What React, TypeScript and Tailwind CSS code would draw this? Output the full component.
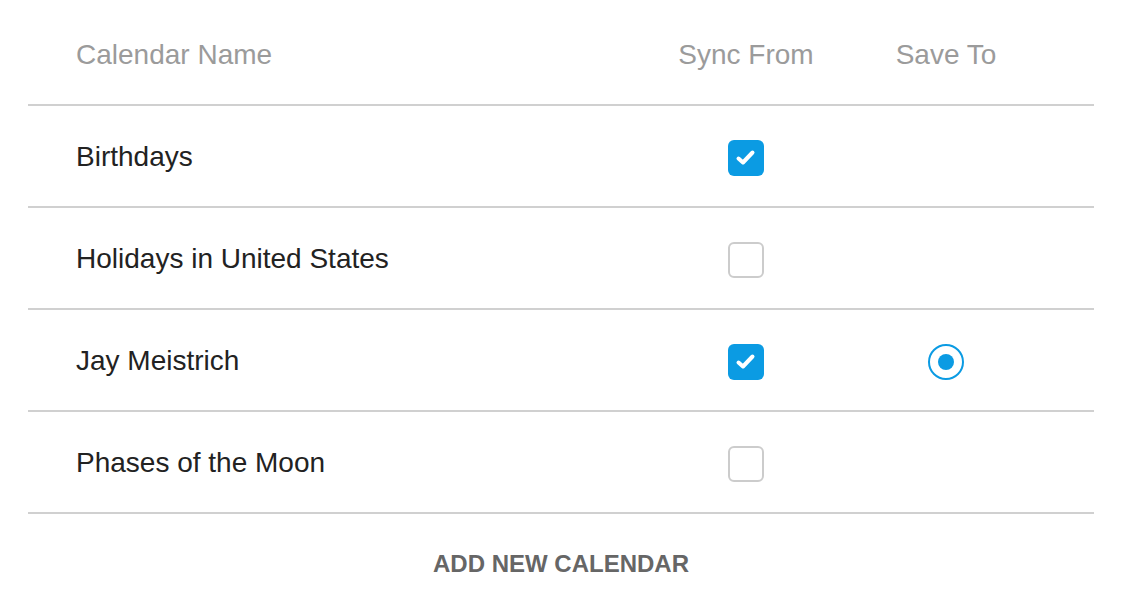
interface CalendarRow {
  name: string;
  sync: boolean;
  save: boolean;
}

const rows: CalendarRow[] = [
  { name: "Birthdays", sync: true, save: false },
  { name: "Holidays in United States", sync: false, save: false },
  { name: "Jay Meistrich", sync: true, save: true },
  { name: "Phases of the Moon", sync: false, save: false },
];

function Checkbox({ checked }: { checked: boolean }) {
  if (!checked) {
    return <div className="mt-1 h-9 w-9 rounded-md border-2 border-[#cccccc] bg-white"></div>;
  }
  return (
    <div className="mt-1 h-9 w-9 rounded-md bg-[#0b9be3]">
      <svg width="36" height="36" viewBox="0 0 36 36" fill="none">
        <path
          d="M10.5 18.5 L15 22.5 L24.5 12.5"
          stroke="white"
          strokeWidth="4"
          strokeLinecap="round"
          strokeLinejoin="round"
        />
      </svg>
    </div>
  );
}

function Radio() {
  return (
    <div className="mt-1 flex h-9 w-9 items-center justify-center rounded-full border-2 border-[#0b9be3]">
      <div className="h-4 w-4 rounded-full bg-[#0b9be3]"></div>
    </div>
  );
}

export default function App() {
  return (
    <div className="min-h-screen bg-white pl-7 pr-[30px] font-['Liberation_Sans',Arial,sans-serif]">
      <div className="flex h-[104px] items-center px-12 pt-1.5 text-[28px] text-[#9b9b9b]">
        <div className="flex-1">Calendar Name</div>
        <div className="w-[200px] text-center">Sync From</div>
        <div className="w-[200px] text-center">Save To</div>
      </div>
      {rows.map((row) => (
        <div
          key={row.name}
          className="flex h-[102px] items-center border-t-2 border-[#d0d0d0] px-12 text-[28px] text-[#222222]"
        >
          <div className="flex-1 pt-0.5">{row.name}</div>
          <div className="flex w-[200px] justify-center">
            <Checkbox checked={row.sync} />
          </div>
          <div className="flex w-[200px] justify-center">{row.save && <Radio />}</div>
        </div>
      ))}
      <div className="flex h-[98px] items-center justify-center border-t-2 border-[#d0d0d0] pt-1">
        <span className="text-[24px] font-bold text-[#666666]">ADD NEW CALENDAR</span>
      </div>
    </div>
  );
}
